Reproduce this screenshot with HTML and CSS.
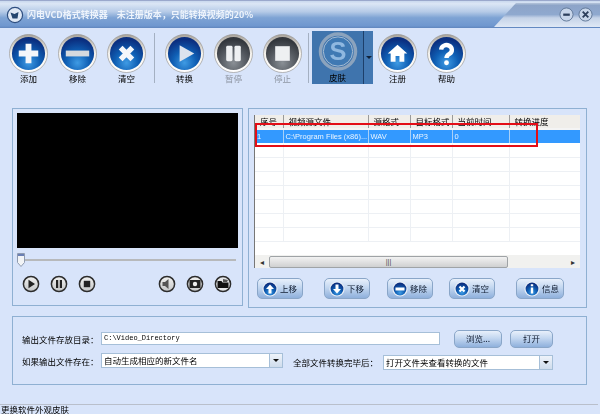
FILE: index.html
```html
<!DOCTYPE html>
<html lang="zh">
<head>
<meta charset="utf-8">
<title>闪电VCD格式转换器</title>
<link rel="stylesheet" href="styles.css">
</head>
<body>
<svg class="defs" width="0" height="0">
  <defs>
    <radialGradient id="blue" cx="50%" cy="78%" r="70%">
      <stop offset="0" stop-color="#3f9be4"/><stop offset="0.5" stop-color="#0f5fb4"/><stop offset="1" stop-color="#0b2f80"/>
    </radialGradient>
    <radialGradient id="gray" cx="50%" cy="78%" r="70%">
      <stop offset="0" stop-color="#8a9096"/><stop offset="0.55" stop-color="#565b62"/><stop offset="1" stop-color="#33373d"/>
    </radialGradient>
    <linearGradient id="ring" x1="0" y1="0" x2="0" y2="1">
      <stop offset="0" stop-color="#a9a49c"/><stop offset="0.5" stop-color="#f5f3ee"/><stop offset="1" stop-color="#ffffff"/>
    </linearGradient>
    <linearGradient id="mini" x1="0" y1="0" x2="0" y2="1">
      <stop offset="0" stop-color="#f2f2f0"/><stop offset="1" stop-color="#c4c6c8"/>
    </linearGradient>
    <linearGradient id="tab" x1="0" y1="0" x2="0" y2="1">
      <stop offset="0" stop-color="#b4c4da"/><stop offset="0.1" stop-color="#8da4c8"/><stop offset="0.48" stop-color="#8fa9cf"/><stop offset="0.62" stop-color="#c5d3e8"/><stop offset="1" stop-color="#dfe8f5"/>
    </linearGradient>
    <symbol id="disc-blue" viewBox="0 0 40 40">
      <circle cx="20" cy="20" r="19.5" fill="url(#ring)" stroke="#8d8a84" stroke-width=".6"/>
      <circle cx="20" cy="20" r="17" fill="url(#blue)"/>
    </symbol>
    <symbol id="disc-gray" viewBox="0 0 40 40">
      <circle cx="20" cy="20" r="19.5" fill="url(#ring)" stroke="#8d8a84" stroke-width=".6"/>
      <circle cx="20" cy="20" r="17" fill="url(#gray)"/>
    </symbol>
    <symbol id="mini-disc" viewBox="0 0 18 18">
      <circle cx="9" cy="9" r="7.6" fill="url(#mini)" stroke="#2c2c2c" stroke-width="1.5"/>
    </symbol>
    <symbol id="small-disc" viewBox="0 0 16 16">
      <circle cx="8" cy="8" r="7.6" fill="#e8eef6"/>
      <circle cx="8" cy="8" r="6.4" fill="url(#blue)"/>
    </symbol>
  </defs>
</svg>

<div class="window">
  <header class="titlebar">
    <svg class="app-icon" viewBox="0 0 18 18"><circle cx="9" cy="9" r="7.6" fill="#dfe8f5" stroke="#2f4f80" stroke-width="1.2"/><path d="M4.5 6.5l4 1.5 4-2-1 6.5h-5z" fill="#24456f"/></svg>
    <span class="title-text">闪电VCD格式转换器　未注册版本，只能转换视频的20%</span>
    <div class="title-tab">
      <svg class="tab-shape" viewBox="0 0 106 28" preserveAspectRatio="none"><path d="M0 27 L22 3 H106 V27 Z" fill="url(#tab)"/></svg>
      <svg class="win-btn" viewBox="0 0 16 16"><circle cx="8" cy="8" r="7" fill="#c8d6ea" stroke="#5f7696"/><rect x="4.5" y="7" width="7" height="2.4" fill="#2d3f5c"/></svg>
      <svg class="win-btn" viewBox="0 0 16 16"><circle cx="8" cy="8" r="7" fill="#c8d6ea" stroke="#5f7696"/><path d="M5 5l6 6M11 5l-6 6" stroke="#2d3f5c" stroke-width="2"/></svg>
    </div>
  </header>

  <nav class="toolbar">
    <div class="tool">
      <svg class="tool-icon" viewBox="0 0 40 40"><use href="#disc-blue"/><path d="M20 10v20M10 20h20" stroke="#f4f6fa" stroke-width="6"/></svg>
      <span>添加</span>
    </div>
    <div class="tool">
      <svg class="tool-icon" viewBox="0 0 40 40"><use href="#disc-blue"/><rect x="8" y="17" width="24" height="6" fill="#d5d9de"/></svg>
      <span>移除</span>
    </div>
    <div class="tool">
      <svg class="tool-icon" viewBox="0 0 40 40"><use href="#disc-blue"/><path d="M14 14l12 12M26 14L14 26" stroke="#f4f6fa" stroke-width="5.500"/></svg>
      <span>清空</span>
    </div>
    <div class="tool-sep"></div>
    <div class="tool">
      <svg class="tool-icon" viewBox="0 0 40 40"><use href="#disc-blue"/><path d="M15 11.500L30 20 15 28.500Z" fill="#dbe3ee"/></svg>
      <span>转换</span>
    </div>
    <div class="tool disabled">
      <svg class="tool-icon" viewBox="0 0 40 40"><use href="#disc-gray"/><rect x="12.500" y="12" width="6.500" height="16" rx="1.500" fill="#eef0f2"/><rect x="21" y="12" width="6.500" height="16" rx="1.500" fill="#eef0f2"/></svg>
      <span>暂停</span>
    </div>
    <div class="tool disabled">
      <svg class="tool-icon" viewBox="0 0 40 40"><use href="#disc-gray"/><rect x="12.500" y="12.500" width="15" height="15" fill="#eef0f2"/></svg>
      <span>停止</span>
    </div>
    <div class="tool-sep sep-thin"></div>
    <div class="skin">
      <div class="skin-main">
        <svg class="tool-icon" viewBox="0 0 40 40"><circle cx="20" cy="20" r="18" fill="none" stroke="#8ba3bd" stroke-width="3.500"/><circle cx="20" cy="20" r="15" fill="#3f79b3" stroke="#a7bdd4"/><text class="skin-s" x="20" y="29" text-anchor="middle">S</text></svg>
        <span>皮肤</span>
      </div>
      <div class="skin-arrow"><i></i></div>
    </div>
    <div class="tool">
      <svg class="tool-icon" viewBox="0 0 40 40"><use href="#disc-blue"/><path d="M20 11L10 20h3v8.500h5v-6h4v6h5V20h3z" fill="#fff"/></svg>
      <span>注册</span>
    </div>
    <div class="tool">
      <svg class="tool-icon" viewBox="0 0 40 40"><use href="#disc-blue"/><path d="M14.500 16a5.500 5 0 1 1 8.500 4.500c-2 1.200-3 2-3 4" fill="none" stroke="#fff" stroke-width="4.500"/><circle cx="20" cy="29.500" r="2.500" fill="#fff"/></svg>
      <span>帮助</span>
    </div>
  </nav>

  <main class="panels">
    <section class="panel player">
      <div class="video"></div>
      <div class="slider"><svg class="thumb" viewBox="0 0 8 14"><path d="M.5.500h7v9L4 13.500.5 9.500z" fill="#f2f4f6" stroke="#8f9bb0"/><rect x="1" y="1" width="6" height="2" fill="#6a80b5"/></svg></div>
      <div class="controls">
        <div class="ctrl-group">
          <svg class="ctrl" viewBox="0 0 18 18"><use href="#mini-disc"/><path d="M6.500 4.800L13 9l-6.500 4.200z" fill="#222"/></svg>
          <svg class="ctrl" viewBox="0 0 18 18"><use href="#mini-disc"/><path d="M6 5h2.200v8H6zM9.800 5H12v8H9.800z" fill="#222"/></svg>
          <svg class="ctrl" viewBox="0 0 18 18"><use href="#mini-disc"/><rect x="5.800" y="5.800" width="6.400" height="6.400" fill="#222"/></svg>
        </div>
        <div class="ctrl-group">
          <svg class="ctrl" viewBox="0 0 18 18"><use href="#mini-disc"/><path d="M4.500 7h2.500l3.500-3v10L7 11H4.500z" fill="#555"/></svg>
          <svg class="ctrl" viewBox="0 0 18 18"><use href="#mini-disc"/><rect x="3.500" y="5" width="11" height="8" fill="#222"/><circle cx="9" cy="9" r="2.200" fill="#eee"/></svg>
          <svg class="ctrl" viewBox="0 0 18 18"><circle cx="9" cy="9" r="7.600" fill="#e4e6e8" stroke="#2c2c2c" stroke-width="1.500"/><path d="M3.500 6h4l1 1.500h6V13h-11z" fill="#111"/><path d="M9 4l5 1-1 2H9z" fill="#555"/></svg>
        </div>
      </div>
    </section>

    <section class="panel list-panel">
      <div class="list">
        <table class="grid">
          <colgroup><col class="c1"><col class="c2"><col class="c3"><col class="c4"><col class="c5"><col class="c6"></colgroup>
          <thead><tr><th>序号</th><th>视频源文件</th><th>源格式</th><th>目标格式</th><th>当前时间</th><th>转换进度</th></tr></thead>
          <tbody>
            <tr class="selected"><td>1</td><td>C:\Program Files (x86)...</td><td>WAV</td><td>MP3</td><td>0</td><td></td></tr>
            <tr><td></td><td></td><td></td><td></td><td></td><td></td></tr>
            <tr><td></td><td></td><td></td><td></td><td></td><td></td></tr>
            <tr><td></td><td></td><td></td><td></td><td></td><td></td></tr>
            <tr><td></td><td></td><td></td><td></td><td></td><td></td></tr>
            <tr><td></td><td></td><td></td><td></td><td></td><td></td></tr>
            <tr><td></td><td></td><td></td><td></td><td></td><td></td></tr>
            <tr><td></td><td></td><td></td><td></td><td></td><td></td></tr>
          </tbody>
        </table>
        <div class="hscroll">
          <span class="sc-arrow">◂</span>
          <div class="sc-track"><div class="sc-thumb">|||</div></div>
          <span class="sc-arrow">▸</span>
        </div>
        <div class="annot"></div>
      </div>
      <div class="list-actions">
        <button class="pill w46"><svg viewBox="0 0 16 16"><use href="#small-disc"/><path d="M8 3.500L12 8H9.500v4.500h-3V8H4z" fill="#fff"/></svg>上移</button>
        <button class="pill w46"><svg viewBox="0 0 16 16"><use href="#small-disc"/><path d="M8 12.500L12 8H9.500V3.500h-3V8H4z" fill="#fff"/></svg>下移</button>
        <button class="pill w46"><svg viewBox="0 0 16 16"><use href="#small-disc"/><rect x="3.500" y="6.500" width="9" height="3" fill="#fff"/></svg>移除</button>
        <button class="pill w46"><svg viewBox="0 0 16 16"><use href="#small-disc"/><path d="M5.500 5.500l5 5M10.500 5.500l-5 5" stroke="#fff" stroke-width="2.200"/></svg>清空</button>
        <button class="pill w48"><svg viewBox="0 0 16 16"><use href="#small-disc"/><path d="M6.800 6.500h2.400v6H6.800zM6.800 3.200h2.400v2H6.800z" fill="#fff"/></svg>信息</button>
      </div>
    </section>
  </main>

  <section class="panel output">
    <div class="out-row row-a">
      <label class="lbl lbl-a">输出文件存放目录：</label>
      <div class="field path">C:\Video_Directory</div>
      <button class="pill plain browse">浏览...</button>
      <button class="pill plain open">打开</button>
    </div>
    <div class="out-row row-b">
      <label class="lbl lbl-a lbl-c">如果输出文件存在：</label>
      <div class="field combo combo-a"><span>自动生成相应的新文件名</span><i class="drop"></i></div>
      <label class="lbl lbl-b">全部文件转换完毕后：</label>
      <div class="field combo combo-b"><span>打开文件夹查看转换的文件</span><i class="drop"></i></div>
    </div>
  </section>

  <footer class="status">更换软件外观皮肤</footer>
</div>
</body>
</html>
```

FILE: styles.css
```css
* { box-sizing: border-box; }
html, body { margin: 0; padding: 0; }
body {
  width: 600px;
  height: 414px;
  overflow: hidden;
  background: #d8e4fa;
  font-family: "Noto Sans CJK SC", "Liberation Sans", sans-serif;
  font-size: 8.5px;
  color: #000;
}
.defs { position: absolute; }
.window { width: 600px; height: 414px; display: flex; flex-direction: column; filter: blur(.2px); }

/* title bar */
.titlebar {
  height: 28px;
  flex: none;
  display: flex;
  align-items: center;
  padding-left: 6px;
  position: relative;
  background: linear-gradient(#c9d8ee 0, #dbe6f5 10%, #b5cae7 40%, #7ea3d4 62%, #6f97cf 92%, #5f85bd 100%);
  border-top: 1px solid #9aa8cc;
}
.app-icon { width: 18px; height: 18px; flex: none; }
.title-text {
  margin-left: 3px;
  font-size: 9px;
  font-weight: 700;
  color: #eef4fc;
  white-space: nowrap;
}
.title-tab {
  position: absolute;
  right: 0;
  top: -1px;
  width: 106px;
  height: 28px;
  display: flex;
  align-items: center;
  justify-content: flex-end;
  gap: 4px;
  padding: 0 7px 0 0;
}
.tab-shape { position: absolute; inset: 0; width: 100%; height: 100%; }
.win-btn { width: 15px; height: 15px; position: relative; }

/* toolbar */
.toolbar {
  height: 80px;
  flex: none;
  display: flex;
  align-items: flex-start;
  padding: 3px 0 0 4px;
}
.tool {
  width: 49px;
  flex: none;
  display: flex;
  flex-direction: column;
  align-items: center;
  padding-top: 3px;
  font-size: 8.5px;
  line-height: 13px;
}
.tool-icon { width: 39px; height: 39px; display: block; margin-bottom: -1px; }
.tool.disabled { color: #8f96a3; }
.tool-sep { width: 1px; height: 50px; margin: 2px 5px 0 3px; background: #a4b0c2; flex: none; }
.sep-thin { margin: 2px 3px 0 1px; height: 50px; }
.skin {
  width: 61px;
  height: 53px;
  flex: none;
  display: flex;
  background: #3f74ad;
  font-size: 8.5px;
  line-height: 13px;
}
.skin-main { width: 52px; display: flex; flex-direction: column; align-items: center; padding-top: 1px; border-right: 1px solid #1d3f6a; }
.skin-main .tool-icon { margin-bottom: 0; width: 40px; height: 40px; }
.skin-arrow { flex: 1; display: flex; align-items: center; justify-content: center; background: #4378b2; }
.skin-arrow i { border: 3px solid transparent; border-top-color: #10223a; border-bottom: 0; }
.skin-s { font-family: "Liberation Sans", sans-serif; font-weight: 700; font-size: 26px; fill: #8fb8e0; }

/* panels */
.panels { display: flex; gap: 5px; padding-left: 12px; flex: none; height: 200px; }
.panel { border: 1px solid #8fb0d2; }
.player { width: 231px; height: 198px; padding: 4px; display: flex; flex-direction: column; }
.video { height: 135px; background: #000; flex: none; }
.slider {
  flex: none;
  margin: 11px 2px 0 3px;
  height: 2px;
  background: #b7b9bb;
  position: relative;
}
.thumb { position: absolute; left: -3px; top: -6px; width: 8px; height: 14px; }
.controls { display: flex; justify-content: space-between; padding: 14px 6px 0 5px; }
.ctrl-group { display: flex; gap: 10px; }
.ctrl { width: 18px; height: 18px; display: block; }

.list-panel { width: 339px; height: 200px; padding: 6px 6px 0 5px; flex: none; }
.list { height: 153px; width: 326px; position: relative; border-left: 1px solid #777; background: #fff; overflow: hidden; display: flex; flex-direction: column; }
.grid { border-collapse: collapse; table-layout: fixed; width: 326px; flex: none; font-size: 8.5px; }
.c1 { width: 28px; } .c2 { width: 85px; } .c3 { width: 42px; } .c4 { width: 42px; } .c5 { width: 57px; } .c6 { width: 72px; }
.grid th {
  height: 13px;
  padding: 0 0 0 5px;
  line-height: 13px;
  font-weight: 400;
  font-size: 8.5px;
  text-align: left;
  background: #f0eeea;
  border-right: 1px solid #9a9a9a;
  border-bottom: 2px solid #f4f4f4;
  white-space: nowrap;
}
.grid td {
  height: 14px;
  padding: 0 0 0 2px;
  line-height: 13px;
  border-right: 1px solid #edf0f4;
  border-bottom: 1px solid #edf0f4;
  white-space: nowrap;
}
.grid tbody tr:first-child td { height: 13px; }
.selected td {
  background: #3399ff;
  color: #eaf4ff;
  border-right-color: #a8d0f8 !important;
  border-bottom-color: #fff;
  font-family: "Liberation Sans", sans-serif;
  font-size: 7.5px;
}
.hscroll {
  position: absolute;
  left: 0; right: 0; bottom: 0;
  height: 13px;
  display: flex;
  align-items: center;
  background: #f1f1ef;
}
.sc-arrow { width: 14px; flex: none; text-align: center; font-size: 8px; line-height: 12px; color: #333; }
.sc-track { flex: 1; height: 12px; }
.sc-thumb {
  width: 239px;
  height: 12px;
  border: 1px solid #9fa3a6;
  border-radius: 2px;
  background: linear-gradient(#f2f2f2, #cfd0d1);
  text-align: center;
  font-size: 7px;
  line-height: 10px;
  color: #444;
  font-family: "Liberation Sans", sans-serif;
}
.annot {
  position: absolute;
  left: 0; top: 8px;
  width: 283px;
  height: 24px;
  border: 2px solid #e30d17;
  pointer-events: none;
}

.list-actions { height: 21px; margin-top: 10px; display: flex; gap: 21px; padding-left: 3px; }
.pill {
  height: 21px;
  border: 1px solid #8aa6c8;
  border-radius: 5px;
  background: linear-gradient(#e8f0fb 0, #c3d7f0 45%, #8fb0dc 100%);
  padding: 0 0 0 4px;
  display: inline-flex;
  align-items: center;
  gap: 2px;
  font: 8.5px/1 "Noto Sans CJK SC", sans-serif;
  color: #101c30;
  flex: none;
  white-space: nowrap;
}
.pill svg { width: 16px; height: 16px; flex: none; }
.w46 { width: 46px; }
.w48 { width: 48px; padding-left: 7px; }
.list-actions .pill:nth-child(3) { margin-left: -4px; }
.list-actions .pill:nth-child(4) { margin-left: -5px; }

/* output */
.output {
  margin: 8px 0 0 12px;
  width: 575px;
  height: 69px;
  flex: none;
  padding: 12px 0 0 9px;
}
.out-row { display: flex; align-items: center; }
.row-a { height: 19px; }
.row-b { height: 16px; margin-top: 5px; align-items: flex-start; }
.lbl { font-size: 8.5px; line-height: 14px; width: 79px; white-space: nowrap; flex: none; }
.lbl-c { margin-top: 1px; }
.lbl-b { width: 90px; margin-left: 10px; margin-top: 2px; }
.field { height: 13px; background: #fff; border: 1px solid #a6bfd8; }
.path {
  width: 339px;
  font-family: "Liberation Mono", monospace;
  font-size: 7px;
  line-height: 11px;
  padding-left: 2px;
  white-space: nowrap;
}
.combo { display: flex; align-items: center; justify-content: space-between; height: 15px; font-size: 8.5px; line-height: 13px; padding-left: 2px; }
.combo-a { width: 182px; }
.combo-b { width: 170px; margin-top: 2px; }
.drop { width: 13px; height: 13px; flex: none; background: linear-gradient(#eef3fa, #cfdcec); border-left: 1px solid #a6bfd8; position: relative; }
.drop::after { content: ""; position: absolute; left: 3px; top: 5px; border: 3px solid transparent; border-top-color: #111; border-bottom: 0; }
.plain { justify-content: center; padding: 0; height: 18px; border-radius: 5px; font-size: 8.5px; }
.browse { width: 48px; margin-left: 14px; }
.open { width: 43px; margin-left: 8px; }

.status {
  margin: 19px 2px 0 0;
  flex: none;
  height: 10px;
  border-top: 1px solid #b9bfcb;
  background: #d8e4fa;
  font-size: 8.5px;
  line-height: 9px;
  padding-left: 1px;
}
```
